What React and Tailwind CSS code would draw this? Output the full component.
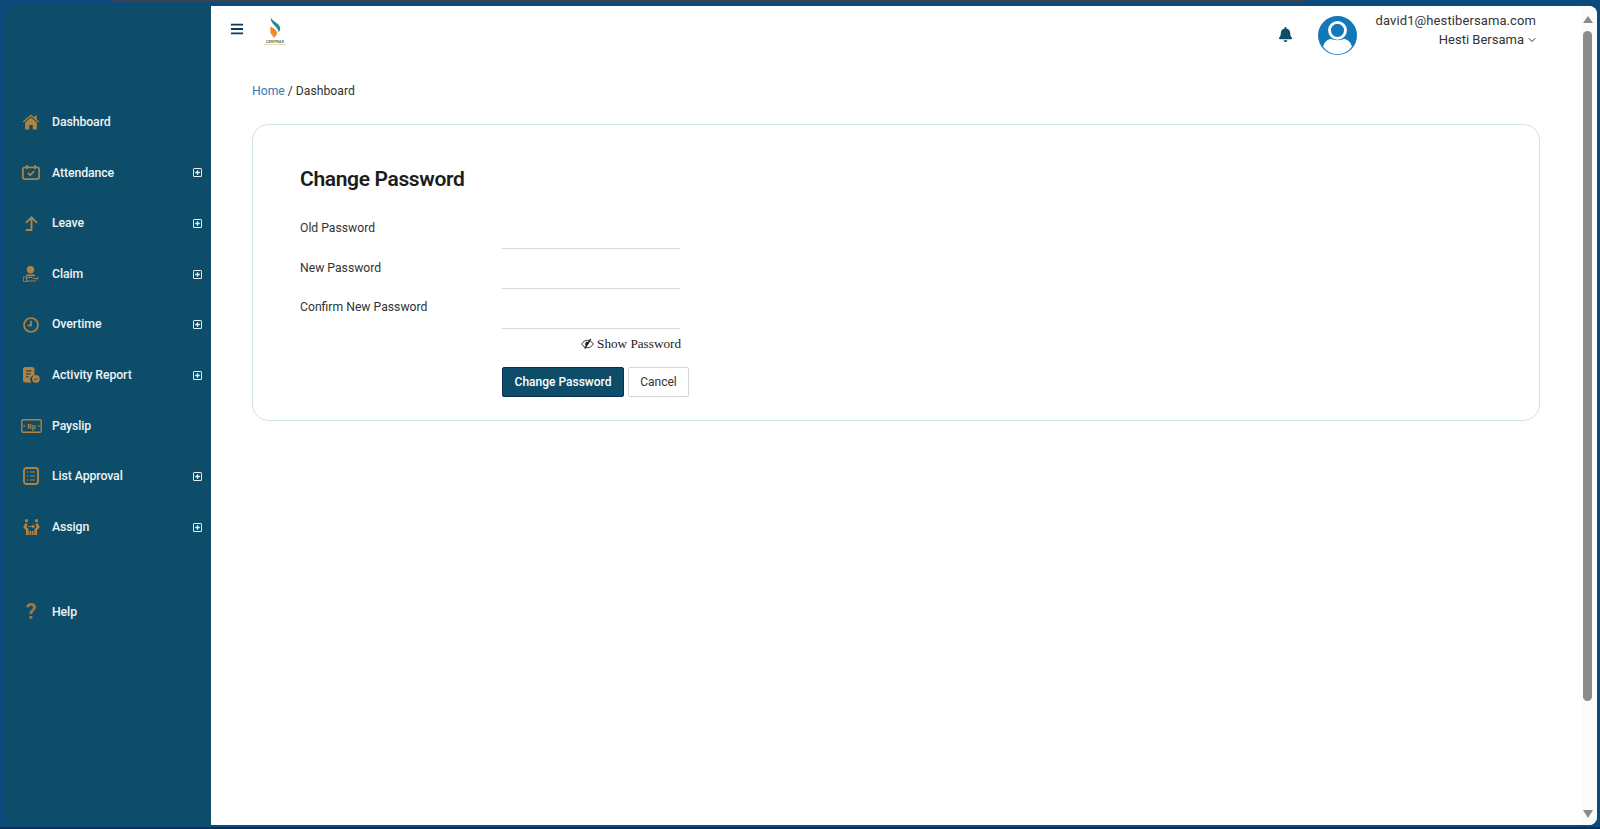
import React from 'react';
import { ChevronDown } from 'lucide-react';
import { FaBars, FaBell } from 'react-icons/fa';

const HomeIcon = () => (
  <svg width="18" height="16" viewBox="0 0 20 18" fill="#b5813f">
    <path d="M10 .5 .6 8.600l1 1.100L10 2.600l8.400 7.100 1-1.100-3-2.600V1.600h-2.200v2.600z" />
    <path d="M10 4 3.400 9.600V17.400h4.600v-5h4v5h4.600V9.600z" />
  </svg>
);

const CalendarIcon = () => (
  <svg width="18" height="15" viewBox="0 0 18 15" fill="none" stroke="#b5813f" strokeWidth="1.700">
    <rect x=".9" y="2.400" width="16.200" height="11.700" rx="2" />
    <path d="M5 0v4.200M13 0v4.200M5.800 7.800l2.400 2.400 4.200-4.200" />
  </svg>
);

const LeaveIcon = () => (
  <svg width="13" height="15" viewBox="0 0 13 15" fill="none" stroke="#b5813f" strokeWidth="1.900">
    <path d="M1 6.800 6.500 1.300 12 6.800M6.500 2v12H.8" />
  </svg>
);

const ClaimIcon = () => (
  <svg width="16" height="16" viewBox="0 0 16 16" fill="#b5813f">
    <circle cx="7.500" cy="3.800" r="3.700" />
    <path d="M3.800 8.500h7.400l1.300 1.700H2.500z" />
    <rect x=".4" y="11" width="3" height="4.500" fill="none" stroke="#b5813f" strokeWidth=".8" />
    <path d="M3.400 11.500h5.600l1 1h4.200l1.300-1.300-3 3.800H3.400z" fill="none" stroke="#b5813f" strokeWidth=".9" />
  </svg>
);

const ClockIcon = () => (
  <svg width="16" height="16" viewBox="0 0 16 16" fill="none" stroke="#b5813f" strokeWidth="1.700">
    <circle cx="8" cy="8" r="7" />
    <path d="M8 3.800v4.600H4.600" />
  </svg>
);

const ReportIcon = () => (
  <svg width="17" height="16" viewBox="0 0 17 16" fill="#b5813f">
    <path d="M2.500 0h6.500A2.500 2.500 0 0 1 11.500 2.500v5.700A4.300 4.300 0 0 0 8.400 15.600H2.500A2.500 2.500 0 0 1 0 13.100V2.500A2.500 2.500 0 0 1 2.500 0z" />
    <path d="M3 3.800h5.500M3 6.800h4.500M3 9.800h2.500" stroke="#0d4d69" strokeWidth="1.200" />
    <circle cx="12.900" cy="11.900" r="3.800" />
    <path d="m11.100 11.900 1.300 1.300 2-2.200" fill="none" stroke="#0d4d69" strokeWidth="1" />
  </svg>
);

const PayslipIcon = () => (
  <svg width="21" height="14" viewBox="0 0 21 14" fill="none" stroke="#b5813f">
    <rect x=".8" y=".8" width="19.400" height="12.400" rx="1.200" strokeWidth="1.400" />
    <path d="M2.500 7h1.500M17 7h1.500" strokeWidth="1.400" />
    <text x="10.500" y="9.500" textAnchor="middle" fontSize="7" fontWeight="700" fill="#b5813f" stroke="none" fontFamily="Roboto, sans-serif">Rp</text>
  </svg>
);

const ApprovalIcon = () => (
  <svg width="16" height="18" viewBox="0 0 16 18" fill="none" stroke="#b5813f" strokeWidth="1.900">
    <rect x="1" y="1" width="14" height="16" rx="2.500" />
    <path d="M3.800 5h1.500M7 5h5M3.800 9h1.500M7 9h5M3.800 13h1.500M7 13h5" strokeWidth="1.200" />
  </svg>
);

const AssignIcon = () => (
  <svg width="17" height="16" viewBox="0 0 17 16" fill="#b5813f">
    <circle cx="3.500" cy="1.700" r="1.600" />
    <circle cx="13.500" cy="1.700" r="1.600" />
    <path d="M2.300 4 .3 8.200 3 11.200V16h2.700v-5.500L3.600 8.200 4.600 5z" />
    <path d="M14.700 4l2 4.200-2.700 3V16h-2.700v-5.500l2.100-2.300-1-3.200z" />
    <path d="M6.500 12h1.700v4H6.500zM8.800 12h1.700v4H8.800z" />
    <path d="M5.500 7.500h5.500M9.300 5.800 11.300 7.500l-2 1.700" fill="none" stroke="#b5813f" strokeWidth="1.100" />
  </svg>
);

const menu = [
  { label: 'Dashboard', icon: <HomeIcon /> },
  { label: 'Attendance', icon: <CalendarIcon />, expand: true },
  { label: 'Leave', icon: <LeaveIcon />, expand: true },
  { label: 'Claim', icon: <ClaimIcon />, expand: true },
  { label: 'Overtime', icon: <ClockIcon />, expand: true },
  { label: 'Activity Report', icon: <ReportIcon />, expand: true },
  { label: 'Payslip', icon: <PayslipIcon /> },
  { label: 'List Approval', icon: <ApprovalIcon />, expand: true },
  { label: 'Assign', icon: <AssignIcon />, expand: true },
];

const PlusBox = () => (
  <svg width="9" height="9" viewBox="0 0 9 9" className="shrink-0">
    <rect width="9" height="9" rx="1.500" fill="#e8eef1" />
    <rect x="1" y="1" width="7" height="7" fill="#0d4d69" />
    <path d="M2.200 4.500h4.600M4.500 2.200v4.600" stroke="#e8eef1" strokeWidth="1.300" />
  </svg>
);

const MenuItem = ({ item }) => (
  <div className="flex h-[50.6px] items-center pl-[16px] pr-[9px]">
    <span className="flex w-[22px] justify-center">{item.icon}</span>
    <span className="ml-[10px] flex-1 text-[12.3px] font-medium tracking-[-0.1px] text-[#eef3f5]">{item.label}</span>
    {item.expand && <PlusBox />}
  </div>
);

const Field = ({ label, mt }) => (
  <div className={`flex items-start ${mt}`}>
    <label className="w-[202px] pt-[1.4px] text-[12.2px] leading-[14px] text-[#333333]">{label}</label>
    <div className="h-[30px] w-[178px] border-b border-[#d9d9d9]" />
  </div>
);

const App = () => {
  return (
    <div className="flex h-[829px] w-[1600px] flex-col overflow-hidden bg-[#0b4a7a] font-['Roboto',sans-serif]">
      <div className="h-[6px] shrink-0">
        <div className="ml-[113px] h-[2px] w-[1195px] rounded-b-[3px] bg-[#3f4347]" />
      </div>
      <div className="flex min-h-0 flex-1 pl-[4px] pr-[3px]">
        <aside className="flex w-[207px] shrink-0 flex-col rounded-l-[8px] bg-[#0d4d69] pt-[91px]">
          {menu.map((item) => (
            <MenuItem key={item.label} item={item} />
          ))}
          <div className="mt-[34.4px]">
            <MenuItem item={{ label: 'Help', icon: <span className="text-[22px] font-bold leading-none text-[#9c7644]">?</span> }} />
          </div>
        </aside>
        <main className="flex min-w-0 flex-1 rounded-r-[8px] bg-white">
          <div className="min-w-0 flex-1 pl-[41px] pr-[42.5px]">
            <header className="flex h-[63px] items-start pr-[3.5px]">
              <FaBars size={14} color="#0b3a5c" className="mt-[16px] -ml-[22px]" />
              <div className="ml-[20px] mt-[10px] flex w-[22px] flex-col items-center">
                <svg width="13" height="22" viewBox="0 0 12 21">
                  <path d="M1.500 0c-1 5 9 6 9 12 0 1.500-.5 2.500-1.500 3.500C9 10 0 8 1.500 0z" fill="#1f8a96" />
                  <path d="M1.500 10c3 2 6 3.500 6 6 0 2-1.500 3.500-3 5-.5-2-3.500-3.500-3.500-7 0-1.500 0-3 .5-4z" fill="#ef8a2e" />
                </svg>
                <span className="mt-[2px] text-[4px] font-bold leading-[4px] text-[#6b6b5a]">CENTRAX</span>
                <span className="h-[1px] w-[22px] bg-[#e5d9b5]" />
              </div>
              <div className="flex-1" />
              <FaBell size={15} color="#0d4d69" className="mt-[21px]" />
              <svg width="39" height="39" viewBox="0 0 38 38" className="ml-[25px] mt-[10px]">
                <circle cx="19" cy="19" r="19" fill="#1278b8" />
                <circle cx="19" cy="14" r="7.800" fill="none" stroke="#fff" strokeWidth="2.800" />
                <path d="M5 30c1-5 5-7.500 8-7.500 2 1.500 10 1.500 12 0 3 0 7 2.500 8 7.500a17 17 0 0 1-28 0z" fill="#fff" />
              </svg>
              <div className="ml-[19px] mt-[6px] text-right text-[13px] leading-[18px] text-[#333333]">
                <div className="tracking-[0.1px]">david1@hestibersama.com</div>
                <div className="mt-[1px] flex items-center justify-end">
                  Hesti Bersama
                  <ChevronDown size={12} color="#333333" strokeWidth={2} className="ml-[2px] -mr-[2px]" />
                </div>
              </div>
            </header>
            <nav className="mt-[14.7px] text-[12.2px] leading-[14px]">
              <span className="text-[#337ab7]">Home</span>
              <span className="text-[#333333]"> / Dashboard</span>
            </nav>
            <section className="mt-[26.8px] h-[296.5px] rounded-[16px] border border-[#cfe3ea] pl-[47px] pt-[41.5px]">
              <h1 className="text-[21px] font-semibold leading-[24px] tracking-[-0.35px] text-[#1c1c1c]">Change Password</h1>
              <Field label="Old Password" mt="mt-[28.5px]" />
              <Field label="New Password" mt="mt-[9.7px]" />
              <Field label="Confirm New Password" mt="mt-[9.7px]" />
              <div className="flex w-[381px] items-center justify-end pt-[8.5px] font-['Liberation_Serif',serif] text-[13.2px] leading-[14px] text-[#222222]">
                <svg width="13" height="12" viewBox="0 0 14 12" fill="none" className="mr-[3px]">
                  <path d="M.7 6C2.500 3.200 4.500 2 7 2s4.500 1.200 6.300 4C11.500 8.800 9.500 10 7 10S2.500 8.800.7 6z" stroke="#222" />
                  <path d="M4.500 6a2.500 2.500 0 0 1 4.500-1.500L6 8.500A2.500 2.500 0 0 1 4.500 6z" fill="#222" />
                  <path d="M10.500.5 4 11" stroke="#222" strokeWidth="1.400" />
                </svg>
                Show Password
              </div>
              <div className="ml-[202px] mt-[15.3px] flex gap-[4px] text-[12px]">
                <button className="h-[30px] w-[122px] rounded-[2px] border border-[#0b2f5c] bg-[#0d4d69] font-medium text-white">Change Password</button>
                <button className="h-[30px] w-[61px] rounded-[2px] border border-[#d5d5d5] bg-white text-[#333333]">Cancel</button>
              </div>
            </section>
          </div>
          <div className="flex w-[15px] shrink-0 flex-col items-center rounded-r-[8px] bg-[#fbfbfb] pr-[4px] pt-[10px]">
            <div className="h-0 w-0 border-x-[5.5px] border-b-[7px] border-x-transparent border-b-[#8c8c8c]" />
            <div className="mt-[8px] h-[670px] w-[9px] rounded-[5px] bg-[#8c8c8c]" />
            <div className="flex-1" />
            <div className="mb-[7px] h-0 w-0 border-x-[5.5px] border-t-[8px] border-x-transparent border-t-[#8c8c8c]" />
          </div>
        </main>
      </div>
      <div className="h-[2px] shrink-0" />
      <div className="h-[2px] shrink-0 bg-[#0a2f5a]" />
    </div>
  );
};

export default App;
